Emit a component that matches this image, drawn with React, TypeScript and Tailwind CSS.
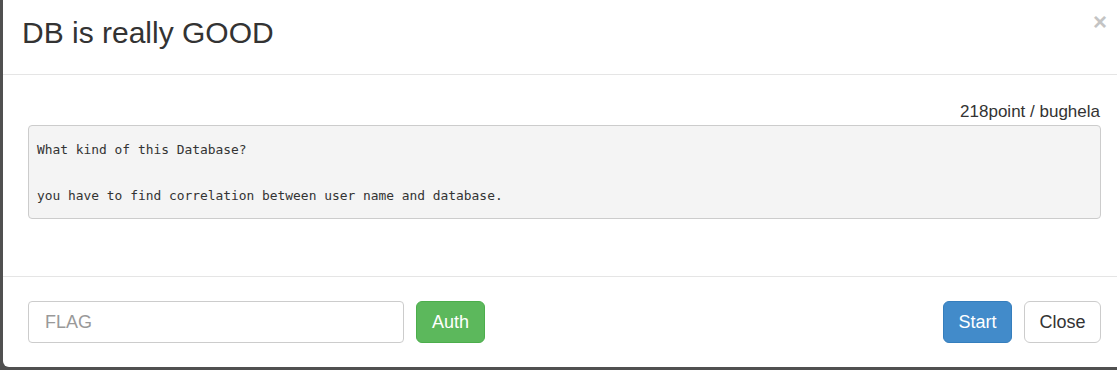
import { useState } from 'react'

const sans = { fontFamily: '"Liberation Sans", Arial, sans-serif' }

export default function App() {
  const [flag, setFlag] = useState('')

  return (
    <div className="w-full h-[370px] overflow-hidden bg-[#505050] pl-[3px]" style={sans}>
      <div className="w-[1123px] h-[367px] bg-white rounded-bl-[6px] flex flex-col text-[#333]">
        {/* header */}
        <div className="relative h-[75px] border-b border-[#e5e5e5] pl-[19px] pt-[16px]">
          <h2 className="text-[30px] leading-[33px] font-normal">DB is really GOOD</h2>
          <button className="absolute right-[19px] top-[8px] text-[24px] leading-[28px] font-bold text-[#c4c4c4]">
            ×
          </button>
        </div>

        {/* body */}
        <div className="h-[201px] px-[25px] pt-[25px]">
          <p className="text-right text-[17px] leading-[24px] pr-[1px]">218point / bughela</p>
          <pre
            className="mt-[1px] h-[94px] bg-[#f4f4f4] border border-[#ccc] rounded-[4px] py-[12px] pl-[8px] text-[12.9px] leading-[23px] text-[#333]"
            style={{ fontFamily: '"DejaVu Sans Mono", "Liberation Mono", monospace' }}
          >
            {'What kind of this Database?\n\nyou have to find correlation between user name and database.'}
          </pre>
        </div>

        {/* footer */}
        <div className="flex-1 border-t border-[#e5e5e5] px-[25px] pt-[24px] flex items-start">
          <input
            value={flag}
            onChange={(e) => setFlag(e.target.value)}
            placeholder="FLAG"
            className="w-[376px] h-[42px] border border-[#ccc] rounded-[4px] px-[16px] text-[18px] placeholder:text-[#999] outline-none"
          />
          <button className="ml-[12px] w-[69px] h-[42px] rounded-[6px] bg-[#5cb85c] border border-[#4cae4c] text-white text-[18px]">
            Auth
          </button>
          <div className="ml-auto flex gap-[12px]">
            <button className="w-[69px] h-[42px] rounded-[6px] bg-[#428bca] border border-[#357ebd] text-white text-[18px]">
              Start
            </button>
            <button className="w-[77px] h-[42px] rounded-[6px] bg-white border border-[#ccc] text-[#333] text-[18px]">
              Close
            </button>
          </div>
        </div>
      </div>
    </div>
  )
}
